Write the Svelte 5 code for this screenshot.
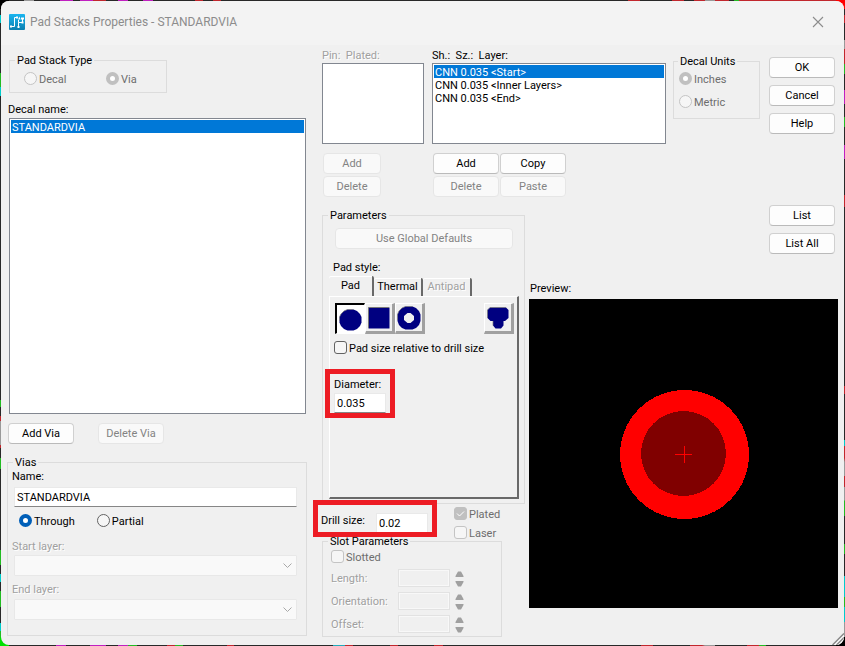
<script>
  const layers = ['CNN 0.035 <Start>', 'CNN 0.035 <Inner Layers>', 'CNN 0.035 <End>'];
  const slotFields = ['Length:', 'Orientation:', 'Offset:'];
  let viaName = $state('STANDARDVIA');
  let diameter = $state('0.035');
  let drill = $state('0.02');
</script>

<div class="desktop">
  <main class="dialog">
    <header class="titlebar">
      <svg class="logo" width="16" height="16" viewBox="0 0 16 16" aria-hidden="true">
        <defs>
          <linearGradient id="sky" x1="0" y1="0" x2="0" y2="1">
            <stop offset="0" stop-color="#19b5f0" />
            <stop offset="1" stop-color="#0b7fb0" />
          </linearGradient>
        </defs>
        <rect width="16" height="16" rx="1" fill="url(#sky)" />
        <path d="M2 12.500H5.500V3.500H8M9.500 12.500V8.500H13.500V4.500M9.500 8.500V6" fill="none" stroke="#fff" />
        <path d="M1 11.500h2v2H1zM7 2.500h2v2H7zM9 5.500l1.500-3 1 3zM12 3.500h3v2h-3zM8.500 12h2v2h-2zM12.500 7.500h2v2h-2z" fill="#fff" />
      </svg>
      <h1>Pad Stacks Properties - STANDARDVIA</h1>
      <button class="close" aria-label="Close">
        <svg width="12" height="12" viewBox="0 0 12 12"><path d="M1 1l10 10M11 1L1 11" stroke="#8c8c8c" stroke-width="1.1" /></svg>
      </button>
    </header>

    <div class="body">
      <section class="left">
        <fieldset class="group type" disabled>
          <legend>Pad Stack Type</legend>
          <label><input type="radio" name="type" />Decal</label>
          <label><input type="radio" name="type" checked />Via</label>
        </fieldset>

        <label class="caption" for="decals">Decal name:</label>
        <select id="decals" class="list decals" size="20">
          <option selected>STANDARDVIA</option>
        </select>

        <div class="via-buttons">
          <button class="btn">Add Via</button>
          <button class="btn" disabled>Delete Via</button>
        </div>

        <fieldset class="group vias">
          <legend>Vias</legend>
          <label class="caption" for="via-name">Name:</label>
          <input id="via-name" class="field wide" type="text" bind:value={viaName} />
          <div class="span">
            <label><input type="radio" name="span" checked />Through</label>
            <label><input type="radio" name="span" />Partial</label>
          </div>
          <label class="caption etched" for="start">Start layer:</label>
          <select id="start" class="combo" disabled></select>
          <label class="caption etched second" for="end">End layer:</label>
          <select id="end" class="combo" disabled></select>
        </fieldset>
      </section>

      <section class="right">
        <div class="top">
          <div class="pins">
            <label class="caption etched" for="pins">Pin:&nbsp; Plated:</label>
            <select id="pins" class="list short" size="5"></select>
            <div class="stack">
              <button class="btn" disabled>Add</button>
              <button class="btn" disabled>Delete</button>
            </div>
          </div>
          <div class="layers">
            <label class="caption" for="layers">Sh.:&nbsp; Sz.:&nbsp; Layer:</label>
            <select id="layers" class="list short" size="5">
              {#each layers as layer, i}
                <option selected={i === 0}>{layer}</option>
              {/each}
            </select>
            <div class="quad">
              <button class="btn">Add</button>
              <button class="btn">Copy</button>
              <button class="btn" disabled>Delete</button>
              <button class="btn" disabled>Paste</button>
            </div>
          </div>
          <fieldset class="group units" disabled>
            <legend>Decal Units</legend>
            <label><input type="radio" name="units" checked />Inches</label>
            <label><input type="radio" name="units" />Metric</label>
          </fieldset>
          <div class="actions">
            <button class="btn">OK</button>
            <button class="btn">Cancel</button>
            <button class="btn">Help</button>
          </div>
        </div>

        <div class="bottom">
          <div class="params">
            <fieldset class="group parameters">
              <legend>Parameters</legend>
              <button class="btn defaults" disabled>Use Global Defaults</button>
              <p class="caption style">Pad style:</p>
              <div class="tabs" role="tablist">
                <button class="tab active" role="tab" aria-selected="true">Pad</button>
                <button class="tab" role="tab" aria-selected="false">Thermal</button>
                <button class="tab" role="tab" aria-selected="false" disabled><span class="etched">Antipad</span></button>
              </div>
              <div class="panel">
                <div class="tools">
                  <button class="tool pressed" aria-label="Circle pad">
                    <svg width="23" height="23" viewBox="0 0 23 23"><path d="M8.500 1.500h6l3.500 1.500 3 3 1.500 3v5.500l-1.500 3.500-3 3-3.500 1.500h-6L5 21l-3-3-1.500-3.500V9L2 6l3-3z" fill="#000080" /><path d="M.5 13V9L2 6l3-3 3.500-1.500h6" fill="none" stroke="#777" stroke-width=".7" /></svg>
                  </button>
                  <button class="tool" aria-label="Square pad">
                    <svg width="22" height="22" viewBox="0 0 22 22"><path d="M.5 .5h21v21H.5z" fill="#000080" /><path d="M.5 21V.5H21" fill="none" stroke="#777" /></svg>
                  </button>
                  <button class="tool" aria-label="Annular pad">
                    <svg width="24" height="24" viewBox="0 0 24 24"><path fill-rule="evenodd" d="M8.500 .5h7l3.500 1.500 3 3 1.500 3.500v6.500l-1.500 4-3 3-3.500 1.500h-7L5 22l-3-3L.5 15V8.500L2 5l3-3zM10.500 7L7 10v4l3.500 3h3l3.500-3v-4l-3.500-3z" fill="#000080" /><path d="M.5 14V8.500L2 5l3-3L8.500 .5h7" fill="none" stroke="#777" stroke-width=".7" /></svg>
                  </button>
                  <button class="tool odd" aria-label="Odd pad">
                    <svg width="22" height="22" viewBox="0 0 22 22"><path d="M3 .5h16l2.500 2.500v8L18 14h-1.500v4.500L14 21.500H8.500L6 18.500V14H3.500L.5 11V3z" fill="#000080" /><path d="M.5 11V3L3 .5h16M6 14v4.500" fill="none" stroke="#777" stroke-width=".7" /></svg>
                  </button>
                </div>
                <label class="relative"><input type="checkbox" />Pad size relative to drill size</label>
                <div class="diameter">
                  <label class="caption" for="diameter">Diameter:</label>
                  <input id="diameter" class="field" type="text" bind:value={diameter} />
                  <span class="mark"></span>
                </div>
              </div>
            </fieldset>

            <div class="drill-row">
              <div class="drill">
                <label for="drill">Drill size:</label>
                <input id="drill" class="field" type="text" bind:value={drill} />
                <span class="mark"></span>
              </div>
              <div class="flags">
                <label class="off"><input type="checkbox" checked disabled />Plated</label>
                <label class="off"><input type="checkbox" disabled />Laser</label>
              </div>
            </div>

            <fieldset class="group slot">
              <legend>Slot Parameters</legend>
              <label class="off"><input type="checkbox" disabled />Slotted</label>
              {#each slotFields as name, i}
                <div class="slot-row">
                  <label class="etched" for={`slot-${i}`}>{name}</label>
                  <input id={`slot-${i}`} class="field" type="text" disabled />
                  <svg width="10" height="18" viewBox="0 0 10 18" aria-hidden="true"><path d="M.5 8h8V7L6 2.500H3L.5 7zM.5 12h8v1L6 17.500H3L.5 13z" fill="#a0a0a0" /></svg>
                </div>
              {/each}
            </fieldset>
          </div>

          <div class="side">
            <div class="actions">
              <button class="btn">List</button>
              <button class="btn">List All</button>
            </div>
            <p class="caption preview-label">Preview:</p>
            <div class="preview">
              <svg width="130" height="130" viewBox="0 0 130 130" shape-rendering="crispEdges" role="img" aria-label="Pad preview">
                <circle cx="65.500" cy="65.500" r="64.500" fill="#f00" />
                <circle cx="64.500" cy="64.500" r="42.500" fill="#800000" />
                <path d="M56 65.500h17M65.500 57v17" stroke="#f00" />
              </svg>
            </div>
          </div>
        </div>
      </section>
    </div>
    <svg class="grip" width="12" height="12" viewBox="0 0 12 12" aria-hidden="true">
      <path d="M12 0L0 12h12z" fill="#fff" /><path d="M12 .5L.5 12M12 4.500L4.500 12M12 8.500L8.500 12" stroke="#888" stroke-width="1.5" />
    </svg>
  </main>
</div>

<style>
  :global(body) { margin: 0; background: #282828; }
  .desktop {
    padding: 1px;
    background:
      linear-gradient(#f00, #f00) right top / 9px 9px no-repeat,
      linear-gradient(#00e000, #00e000) left bottom / 9px 9px no-repeat,
      linear-gradient(#000, #000) left top / 9px 9px no-repeat,
      linear-gradient(#000, #000) right bottom / 9px 9px no-repeat,
      linear-gradient(90deg, #282828 24px, #999 24px 34px, #282828 34px 60px, #c020c0 60px 73px, #282828 73px 80px, #c020c0 80px 93px, #c1272d 93px 106px, #282828 106px 118px, #c020c0 118px 128px, #282828 128px 143px, #c020c0 143px 153px, #282828 153px 195px, #c1272d 195px 203px, #282828 203px 213px, #c1272d 213px 221px, #282828 221px 628px, #c1272d 628px 640px, #282828 640px 672px, #c1272d 672px 684px, #282828 684px 694px, #c1272d 694px 705px, #999 705px 715px, #c1272d 715px 729px, #282828 729px 734px, #2b2 734px 739px, #c1272d 739px) left top / 100% 1px no-repeat,
      linear-gradient(90deg, #282828 56px, #c020c0 56px 66px, #282828 66px 90px, #c020c0 90px 106px, #282828 106px 118px, #c020c0 118px 128px, #2b2 128px 137px, #282828 137px 167px, #c1272d 167px 175px, #2b2 175px 183px, #282828 183px 227px, #c1272d 227px 234px, #282828 234px 333px, #2ab 333px 345px, #c1272d 345px 353px, #282828 353px 390px, #c1272d 390px 398px, #282828 398px 434px, #c1272d 434px 443px, #282828 443px 641px, #c1272d 641px 653px, #282828 653px 690px, #c1272d 690px 702px, #999 705px 715px, #282828 715px 747px, #c1272d 747px 759px, #2b2 759px 766px, #282828 766px) left bottom / 100% 1px no-repeat,
      linear-gradient(#282828 15px, #0cc 15px 23px, #282828 23px 73px, #2b2 73px 87px, #0cc 87px 96px, #282828 96px 400px, #2b2 400px 407px, #282828 407px 416px, #c1272d 416px 421px, #999 421px 445px, #c1272d 445px 448px, #282828 448px 458px, #2b2 458px 469px, #282828 469px 550px, #2b2 550px 565px, #282828 565px 574px, #0cc 574px 582px, #282828 582px 591px, #2b2 591px 607px, #282828 607px 623px, #0cc 623px 631px, #2b2 631px) left top / 1px 100% no-repeat,
      linear-gradient(#282828 15px, #c1272d 15px 23px, #282828 23px 40px, #999 40px 49px, #c1272d 49px 64px, #2b2 64px 74px, #282828 74px 90px, #c020c0 90px 104px, #282828 104px 117px, #2b2 117px 127px, #282828 127px 145px, #c020c0 145px 159px, #282828 159px 195px, #c1272d 195px 207px, #282828 207px 386px, #c1272d 386px 394px, #282828 394px 440px, #0cc 440px 446px, #c1272d 446px 458px, #999 462px 476px, #c1272d 476px 487px, #999 487px 500px, #2b2 501px 516px, #282828 516px 544px, #2b2 544px 554px, #282828 554px 576px, #0cc 576px 597px, #2b2 597px 607px, #0cc 607px 622px, #999 622px) right top / 1px 100% no-repeat,
      #282828;
  }
  .dialog {
    position: relative;
    overflow: hidden;
    box-sizing: border-box;
    min-height: 644px;
    border-radius: 8px;
    background: #f0f0f0;
    color: #000;
    font: 11px/14px Roboto, sans-serif;
  }
  button, input, select { font: inherit; color: inherit; box-sizing: border-box; margin: 0; }
  p { margin: 0; }
  svg { display: block; }

  .titlebar { display: flex; align-items: center; height: 44px; padding: 0 20px 2px 8px; box-sizing: border-box; background: #f3f3f3; }
  h1 { flex: 1; margin: 0 0 0 5px; font: 12px/18px Roboto, sans-serif; color: #8c8c8c; }
  .close { padding: 0; border: 0; background: none; }

  .body {
    display: grid;
    grid-template-columns: minmax(300px, 300fr) minmax(516px, 516fr);
    gap: 15px;
    padding: 0 6px 8px;
  }
  .caption { display: block; height: 14px; line-height: 16px; }
  .etched { color: #a0a0a0; text-shadow: 1px 1px #fff; }
  label { white-space: nowrap; }

  .group { min-width: 0; margin: 0; padding: 0; border: 1px solid #dcdcdc; }
  legend { height: 14px; margin-left: 6px; padding: 0 2px; line-height: 16px; }
  .group:disabled label, .off { color: #6d6d6d; }

  input[type='radio'], input[type='checkbox'] {
    appearance: none;
    flex: none;
    width: 13px;
    height: 13px;
    border: 1px solid #626262;
    background: #f6f6f6;
  }
  input[type='radio'] { border-radius: 50%; }
  input[type='checkbox'] { border-radius: 3px; }
  input[type='radio']:checked { border: 4px solid #005fb8; background: #fff; }
  input:disabled { border-color: #c4c4c4; }
  input[type='radio']:checked:disabled { border-color: #c0c0c0; }
  input[type='checkbox']:checked:disabled {
    background: #c0c0c0 url("data:image/svg+xml,%3Csvg xmlns='http://www.w3.org/2000/svg' viewBox='0 0 11 11'%3E%3Cpath d='M2 5.500l2.500 2.500L9 3.500' fill='none' stroke='white'/%3E%3C/svg%3E");
    border-color: #c0c0c0;
  }
  .type label, .units label, .span label, .relative, .off { display: flex; align-items: flex-start; gap: 2px; height: 14px; line-height: 16px; }

  .btn {
    width: 66px;
    height: 21px;
    padding: 0;
    border: 1px solid #d0d0d0;
    border-bottom-color: #bababa;
    border-radius: 4px;
    background: #fdfdfd;
    white-space: nowrap;
  }
  .btn:disabled { border-color: #e6e6e6; background: #f9f9f9; color: #838383; }

  .list {
    display: block;
    width: 100%;
    padding: 1px;
    border: 1px solid #828790;
    border-radius: 0;
    background: #fff;
    overflow: hidden;
    outline: 0;
  }
  .list option { box-sizing: border-box; min-height: 13px; height: 13px; padding: 1px 1px 0; line-height: 13px; color: #000; }
  .list option:checked { background: #0078d7 linear-gradient(#0078d7, #0078d7); color: #fff; -webkit-text-fill-color: #fff; }

  .field {
    width: 52px;
    height: 20px;
    padding: 0 2px;
    border: 1px solid #e9e9e9;
    border-bottom-color: #868686;
    border-radius: 0;
    background: #fff;
  }
  .field:disabled { border-color: #e2e2e2; background: #f0f0f0; box-shadow: inset 0 0 0 1px #f8f8f8; }

  .left { padding-top: 8px; }
  .type { display: flex; width: 158px; height: 40px; margin: 0 0 9px 2px; box-sizing: border-box; padding: 5px 14px 0; }
  .type legend { margin-left: -9px; }
  .type label { flex: none; width: 82px; }
  .type label + label { width: auto; }
  .left > .caption { margin-left: 1px; }
  .decals { width: calc(100% - 3px); height: 296px; margin: 2px 0 9px 2px; }
  .via-buttons { display: flex; gap: 24px; margin: 0 0 11px 1px; }
  .vias { height: 181px; padding: 0 9px 0 6px; box-sizing: border-box; }
  .vias legend { margin-left: -1px; }
  .vias .caption { margin-left: -2px; }
  .field.wide { display: block; width: 100%; margin-top: 4px; }
  .span { display: flex; gap: 22px; margin: 7px 0 11px 5px; }
  .combo {
    appearance: none;
    display: block;
    width: 100%;
    height: 21px;
    margin-top: 2px;
    border: 1px solid #e8e8e8;
    border-radius: 1px;
    opacity: 1;
    background: #f9f9f9 url("data:image/svg+xml,%3Csvg xmlns='http://www.w3.org/2000/svg' width='9' height='6'%3E%3Cpath d='M.5 .5l4 4 4-4' fill='none' stroke='%23a8a8a8'/%3E%3C/svg%3E") right 4px center no-repeat;
  }
  .vias .second { margin-top: 6px; }
  .second + .combo { margin-top: 3px; }

  .top { display: flex; height: 159px; padding-top: 3px; box-sizing: border-box; }
  .pins { width: 102px; margin-right: 8px; }
  .layers { flex: 1; margin-right: 7px; }
  .short { height: 81px; margin-top: 1px; }
  .stack { display: grid; gap: 2px; margin: 9px 1px; }
  .stack .btn { width: 58px; }
  .quad { display: grid; grid-template-columns: 66px 66px; gap: 2px 1px; margin: 9px 1px; }
  .units { width: 87px; height: 65px; margin: 6px 9px 0 0; padding: 4px 5px; box-sizing: border-box; }
  .units legend { margin-left: -1px; }
  .units label + label { margin-top: 9px; }
  .actions { display: grid; align-content: start; gap: 7px; }
  .top .actions { margin: 9px 3px 0 0; }

  .bottom { display: flex; gap: 4px; }
  .params { width: 203px; }
  .parameters { height: 296px; margin-top: 4px; padding: 0 5px 0 6px; box-sizing: border-box; }
  .parameters legend { margin-left: -1px; }
  .defaults { display: block; width: 178px; margin: 6px 0 0 6px; }
  .style { margin: 11px 0 0 4px; }
  .tabs { display: flex; align-items: flex-end; height: 20px; margin-top: 2px; }
  .tab {
    height: 18px;
    padding: 0;
    width: 49px;
    border: solid #696969;
    border-width: 0 2px 0 0;
    border-radius: 2px 2px 0 0;
    background: #f0f0f0;
    box-shadow: inset 0 1px #fff;
  }
  .tab:first-child { width: 45px; height: 20px; }
  .panel { height: 203px; padding: 6px 3px 0 4px; border: solid #696969; border-width: 1px 2px 2px 1px; border-top-color: #fff; border-left-color: #fff; box-sizing: border-box; }
  .tools { display: flex; padding-left: 1px; }
  .tool { display: grid; place-items: center; width: 30px; height: 31px; padding: 0; border: 2px solid; border-width: 1px 3px 3px 1px; border-color: #fff #a0a0a0 #a0a0a0 #fff; background: #f0f0f0; }
  .tool.pressed { padding: 1px 0 0; border-width: 2px 1px 1px 2px; border-color: #000 #fff #fff #000; background: #fff; }
  .odd { margin-left: auto; }
  .relative { margin-top: 7px; }
  .diameter { position: relative; width: 60px; margin-top: 22px; }
  .diameter .field { display: block; margin-top: 2px; }
  .mark { position: absolute; border: 5px solid #ed1c24; pointer-events: none; }
  .diameter .mark { inset: -8px -1px -5px -9px; }
  .drill-row { display: flex; justify-content: space-between; height: 30px; }
  .drill { position: relative; display: flex; justify-content: space-between; width: 107px; height: 29px; padding-top: 9px; margin-left: -1px; box-sizing: border-box; line-height: 16px; }
  .drill .mark { inset: -4px -9px -4px -8px; }
  .flags { display: grid; gap: 5px; align-content: start; width: 71px; padding-top: 3px; }
  .slot { width: 180px; height: 103px; padding: 2px 0 0 8px; box-sizing: border-box; }
  .slot legend { margin-left: -3px; }
  .slot-row { display: flex; align-items: center; height: 18px; margin-top: 5px; }
  .slot-row label { width: 67px; height: 14px; line-height: 16px; }
  .slot-row .field { height: 18px; margin-right: 5px; }

  .side { flex: 1; padding-top: 1px; }
  .side .actions { justify-content: end; margin-right: 3px; }
  .preview-label { margin: 27px 0 4px 1px; }
  .preview { display: grid; place-items: center; height: 309px; background: #000; }
  .grip { position: absolute; right: 0; bottom: 0; }
</style>
